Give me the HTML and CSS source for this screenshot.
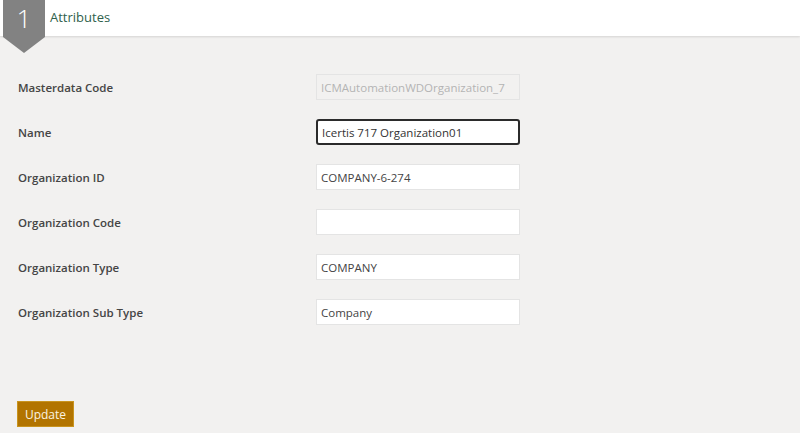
FILE: index.html
```html
<!DOCTYPE html>
<html lang="en">
<head>
    <meta charset="UTF-8">
    <title>Attributes</title>
    <link rel="stylesheet" href="styles.css">
</head>
<body>
    <div class="page">
        <div class="section-header">
            <div class="step-badge">
                <span class="step-num">1</span>
            </div>
            <h1 class="section-title">Attributes</h1>
        </div>

        <form class="attr-form">
            <div class="form-row">
                <label class="form-label">Masterdata Code</label>
                <input class="form-input readonly" type="text" value="ICMAutomationWDOrganization_7" readonly>
            </div>
            <div class="form-row">
                <label class="form-label">Name</label>
                <input class="form-input focused" type="text" value="Icertis 717 Organization01">
            </div>
            <div class="form-row">
                <label class="form-label">Organization ID</label>
                <input class="form-input" type="text" value="COMPANY-6-274">
            </div>
            <div class="form-row">
                <label class="form-label">Organization Code</label>
                <input class="form-input" type="text" value="">
            </div>
            <div class="form-row">
                <label class="form-label">Organization Type</label>
                <input class="form-input" type="text" value="COMPANY">
            </div>
            <div class="form-row">
                <label class="form-label">Organization Sub Type</label>
                <input class="form-input" type="text" value="Company">
            </div>
        </form>

        <div class="actions">
            <button class="update-btn" type="button">Update</button>
        </div>
    </div>
</body>
</html>
```

FILE: styles.css
```css
* {
    margin: 0;
    padding: 0;
    box-sizing: border-box;
    font-family: 'Open Sans', 'Noto Sans', sans-serif;
}

body {
    background-color: #f2f1f0;
    width: 800px;
    height: 433px;
    overflow: hidden;
}

.page {
    height: 433px;
    display: flex;
    flex-direction: column;
}

.section-header {
    position: relative;
    height: 36px;
    background-color: #fff;
    box-shadow: 0 1px 2px rgba(0, 0, 0, 0.12);
    display: flex;
    align-items: flex-start;
    padding-left: 50px;
}

.step-badge {
    position: absolute;
    left: 3px;
    top: 0;
    width: 42px;
    height: 53px;
    background-color: #828282;
    clip-path: polygon(0 0, 100% 0, 100% 70%, 50% 100%, 0 70%);
    text-align: center;
    z-index: 2;
}

.step-num {
    display: block;
    color: #fff;
    font-size: 26px;
    font-weight: 300;
    line-height: 36px;
}

.section-title {
    font-size: 13px;
    font-weight: 400;
    color: #2f5f4c;
    line-height: 34px;
}

.attr-form {
    padding: 38px 0 0 18px;
}

.form-row {
    display: flex;
    align-items: center;
    height: 26px;
    margin-bottom: 19px;
}

.form-label {
    width: 298px;
    font-size: 11.5px;
    font-weight: 600;
    color: #454545;
}

.form-input {
    width: 204px;
    height: 26px;
    border: 1px solid #e4e4e4;
    background-color: #fff;
    padding: 0 4px;
    font-size: 11.5px;
    color: #444;
    outline: none;
}

.form-input.readonly {
    background-color: #f2f1f0;
    color: #b4b4b4;
}

.form-input.focused {
    border: 2px solid #2b2b2b;
    border-radius: 3px;
    color: #333;
}

.actions {
    margin-top: auto;
    padding: 0 0 6px 17px;
}

.update-btn {
    width: 57px;
    height: 26px;
    background-color: #b27400;
    border: 1px solid #c9941f;
    color: #fbf3e0;
    font-size: 12px;
    cursor: pointer;
}
```
